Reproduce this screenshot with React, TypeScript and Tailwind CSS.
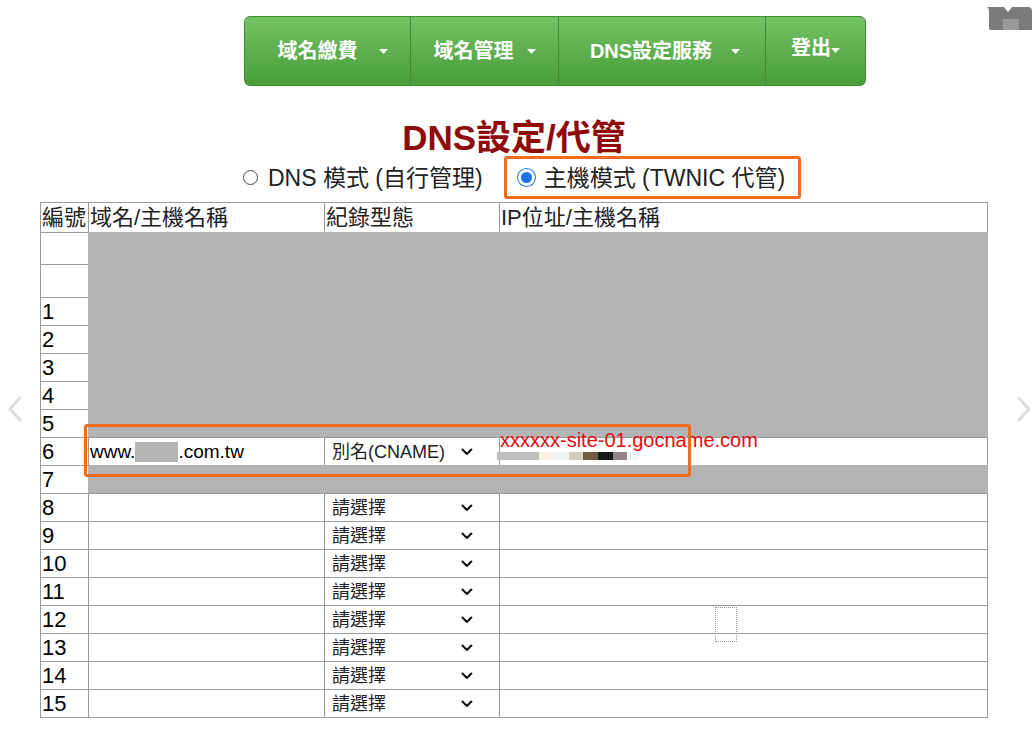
import React from 'react'

const font = { fontFamily: '"Liberation Sans", "Noto Sans CJK TC", sans-serif' }

function Caret({ className = '' }: { className?: string }) {
  return (
    <svg width="9" height="5" viewBox="0 0 9 5" className={className}>
      <path d="M0 0 L9 0 L4.5 5 Z" fill="#fff" />
    </svg>
  )
}

function Chevron() {
  return (
    <svg width="12" height="8" viewBox="0 0 12 8">
      <path d="M1.5 1.5 L6 6 L10.5 1.5" fill="none" stroke="#111" strokeWidth="2.2" strokeLinecap="round" strokeLinejoin="round" />
    </svg>
  )
}

function FakeSelect({ label }: { label: string }) {
  return (
    <div className="flex items-center pl-[7px] pr-[26px] text-[18px] leading-[24px] text-[#222]">
      <span className="w-[132px]">{label}</span>
      <Chevron />
    </div>
  )
}

const cell = 'border border-[#9a9a9a] p-0 align-middle'

export default function App() {
  const numbered = Array.from({ length: 15 }, (_, i) => i + 1)

  return (
    <div className="relative w-[1036px] h-[732px] bg-white overflow-hidden text-black" style={font}>
      {/* top nav */}
      <nav className="mt-[16px] ml-[244px] w-[622px] h-[70px] flex rounded-[6px] border border-[#3f8d31] bg-gradient-to-b from-[#74c264] to-[#489d39] text-white font-bold text-[20px] overflow-hidden">
        <div className="w-[166px] flex items-center justify-center gap-[21px] pl-[10px] border-r border-[#3f8a33]">
          <span>域名繳費</span>
          <Caret />
        </div>
        <div className="w-[148px] flex items-center justify-center gap-[13px] border-r border-[#3f8a33]">
          <span>域名管理</span>
          <Caret />
        </div>
        <div className="w-[207px] flex items-center justify-center gap-[19px] pl-[6px] border-r border-[#3f8a33]">
          <span>DNS設定服務</span>
          <Caret />
        </div>
        <div className="flex-1 flex items-start justify-center pt-[16px]">
          <span>登出</span>
          <Caret className="mt-[15px]" />
        </div>
      </nav>

      {/* title */}
      <h1 className="mt-[32px] h-[38px] leading-[40px] text-center text-[35px] font-bold text-[#8f0a0a] pr-[8px]">DNS設定/代管</h1>

      {/* mode radios */}
      <div className="ml-[243px] h-[43px] flex items-center text-[23px] leading-[28px] text-[#222]">
        <span className="w-[15px] h-[15px] rounded-full border-[1.5px] border-[#444]" />
        <span className="ml-[10px]">DNS 模式 (自行管理)</span>
        <div className="ml-[21px] w-[297px] h-[43px] flex items-center pl-[11px] border-[3px] border-[#f26b1f] rounded-[3px]">
          <span className="w-[17px] h-[17px] rounded-full bg-[#1a73e8] border-[3px] border-white ring-1 ring-[#1a73e8]" />
          <span className="ml-[9px]">主機模式 (TWNIC 代管)</span>
        </div>
      </div>

      {/* table */}
      <table className="mt-[3px] ml-[40px] w-[947px] border-collapse border border-[#9a9a9a] table-fixed">
        <colgroup>
          <col className="w-[48px]" />
          <col className="w-[236px]" />
          <col className="w-[175px]" />
          <col className="w-[488px]" />
        </colgroup>
        <thead>
          <tr className="h-[30px] text-[22px] leading-[26px] text-[#222]">
            <th className={`${cell} text-left font-normal pl-[1px] whitespace-nowrap`}>編號</th>
            <th className={`${cell} text-left font-normal pl-[1px]`}>域名/主機名稱</th>
            <th className={`${cell} text-left font-normal pl-[1px]`}>紀錄型態</th>
            <th className={`${cell} text-left font-normal pl-[1px]`}>IP位址/主機名稱</th>
          </tr>
        </thead>
        <tbody>
          <tr className="h-[32px]">
            <td className={cell} />
            <td className={cell} />
            <td className={cell} />
            <td className={cell} />
          </tr>
          <tr className="h-[33px]">
            <td className={cell} />
            <td className={cell} />
            <td className={cell} />
            <td className={cell} />
          </tr>
          {numbered.map(n => (
            <tr key={n} className="h-[28px]">
              <td className={`${cell} text-[22px] leading-[24px] pl-[1px]`}>{n}</td>
              <td className={`${cell} text-[19px] leading-[24px]`}>
                {n === 6 && (
                  <span className="flex items-center pl-[1px]">
                    www.<span className="inline-block w-[43px] h-[20px] bg-[#b4b4b4]" />.com.tw
                  </span>
                )}
              </td>
              <td className={cell}>
                {n === 6 ? <FakeSelect label="別名(CNAME)" /> : n >= 8 ? <FakeSelect label="請選擇" /> : null}
              </td>
              <td className={cell} />
            </tr>
          ))}
        </tbody>
      </table>

      {/* masked rows */}
      <div className="absolute left-[88px] top-[232px] w-[900px] h-[205px] bg-[#b4b4b4]" />
      <div className="absolute left-[88px] top-[465px] w-[900px] h-[28px] bg-[#b4b4b4]" />

      {/* row 6 value, blurred */}
      <div className="absolute left-[497px] top-[452px] flex h-[8px]">
        <span className="w-[42px] bg-[#bdbdbd]" />
        <span className="w-[14px] bg-[#f7f3ea]" />
        <span className="w-[16px] bg-[#eef3f6]" />
        <span className="w-[14px] bg-[#d6ccc2]" />
        <span className="w-[15px] bg-[#6f5e44]" />
        <span className="w-[15px] bg-[#1b1a1c]" />
        <span className="w-[14px] bg-[#8e8584]" />
        <span className="w-[12px] bg-[#f1f6f8]" />
      </div>
      <div className="absolute left-[500px] top-[428px] text-[20px] leading-[24px] text-[#e00d0d]">xxxxxx-site-01.gocname.com</div>

      {/* highlight around row 6 */}
      <div className="absolute left-[84px] top-[424px] w-[607px] h-[53px] border-[3px] border-[#f26b1f] rounded-[3px]" />

      {/* focus ring leftover */}
      <div className="absolute left-[715px] top-[607px] w-[22px] h-[35px] border border-dotted border-[#999]" />

      {/* side arrows */}
      <svg className="absolute left-[6px] top-[396px]" width="18" height="26" viewBox="0 0 18 26">
        <path d="M14 2 L4 13 L14 24" fill="none" stroke="#dcdcdc" strokeWidth="3" strokeLinecap="round" strokeLinejoin="round" />
      </svg>
      <svg className="absolute left-[1015px] top-[396px]" width="18" height="26" viewBox="0 0 18 26">
        <path d="M4 2 L14 13 L4 24" fill="none" stroke="#dcdcdc" strokeWidth="3" strokeLinecap="round" strokeLinejoin="round" />
      </svg>

      {/* top-right badge */}
      <svg className="absolute left-[984px] top-[5px]" width="50" height="26" viewBox="0 0 50 26">
        <path d="M3 2 H20 L24 7 L28 2 H44 Q48 2 48 6 V25 H6 Q5 25 5 22 V6 Q5 3 3 2 Z" fill="#7b7b7b" />
        <rect x="19" y="14" width="16" height="11" fill="#9a9a9a" />
      </svg>
    </div>
  )
}
